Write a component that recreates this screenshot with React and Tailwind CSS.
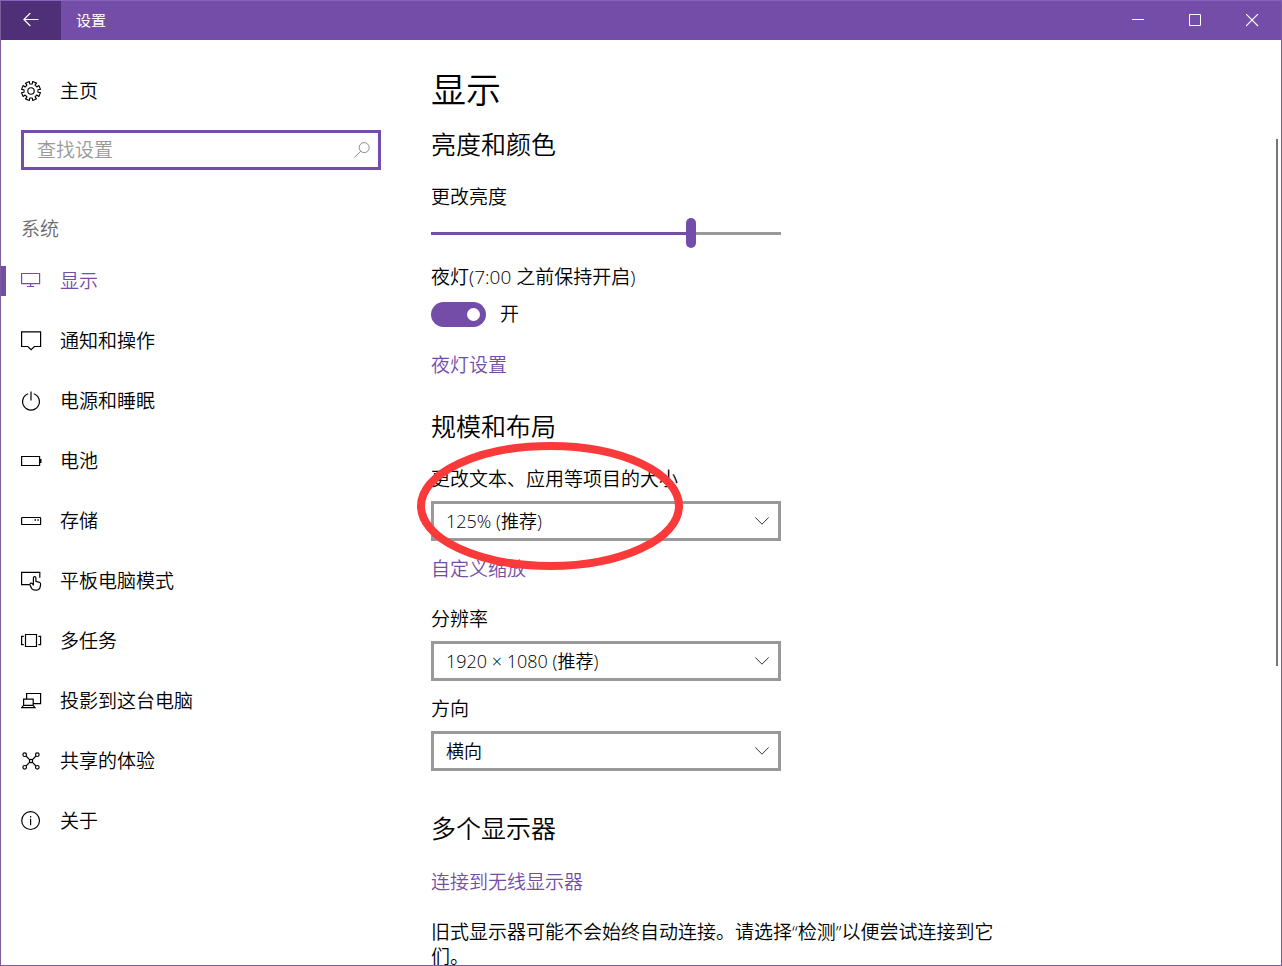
import { useState } from "react";

const NAV_ITEMS = [
  { label: "显示", icon: DisplayIcon, active: true },
  { label: "通知和操作", icon: NotificationIcon },
  { label: "电源和睡眠", icon: PowerIcon },
  { label: "电池", icon: BatteryIcon },
  { label: "存储", icon: StorageIcon },
  { label: "平板电脑模式", icon: TabletIcon },
  { label: "多任务", icon: MultitaskIcon },
  { label: "投影到这台电脑", icon: ProjectIcon },
  { label: "共享的体验", icon: SharedIcon },
  { label: "关于", icon: AboutIcon },
];

// 21px grid, hairline strokes
function Icon({ children }) {
  return (
    <svg className="h-[21px] w-[21px] shrink-0" viewBox="0 0 21 21" fill="none" stroke="currentColor" strokeWidth="1.2" aria-hidden="true">
      {children}
    </svg>
  );
}

function GearIcon() {
  const teeth = [];
  for (let i = 0; i < 8; i++) {
    const a = (i * Math.PI) / 4;
    [
      [7.1, -0.21],
      [9.6, -0.22],
      [9.6, 0.22],
      [7.1, 0.21],
    ].forEach(([r, d]) => teeth.push(`${10 + r * Math.cos(a + d + 0.39)},${10 + r * Math.sin(a + d + 0.39)}`));
  }
  return (
    <Icon>
      <polygon points={teeth.join(" ")} strokeLinejoin="round" strokeWidth="1.1" />
      <circle cx="10" cy="10" r="3.2" strokeWidth="1.1" />
    </Icon>
  );
}

function DisplayIcon() {
  return (
    <Icon>
      <path d="M.6 2.5h18v10.2H.6zM9.6 12.7v2.8M6 15.5h7.2" />
    </Icon>
  );
}

function NotificationIcon() {
  return (
    <Icon>
      <path d="M.6 .9h19v14.6h-6.2l-3.3 3.2-3.3-3.2H.6z" />
    </Icon>
  );
}

function PowerIcon() {
  return (
    <Icon>
      <path d="M10 .5v9M7.2 2.8a8.4 8.4 0 1 0 5.6 0" />
    </Icon>
  );
}

function BatteryIcon() {
  return (
    <Icon>
      <path d="M.6 5.5h18v9H.6z" />
      <path d="M19.6 8v4" strokeWidth="1.8" />
    </Icon>
  );
}

function StorageIcon() {
  return (
    <Icon>
      <rect x=".6" y="6.5" width="19" height="7" rx=".6" />
      <path d="M13.6 9h1.4M16.4 9h1.4" strokeWidth="1.4" />
    </Icon>
  );
}

function TabletIcon() {
  return (
    <Icon>
      <path d="M8.5 13.7H.6V1.3h18.2v5.5" />
      <path d="M12.4 13.4V6.8a1.25 1.25 0 0 1 2.5 0v3.6l3.4.9c1 .3 1.4.9 1.3 1.8l-.3 2.2a4.6 4.6 0 0 1-4.4 3.9h-.8a4.2 4.2 0 0 1-3.3-1.6l-1.7-3.2c-.6-1.3.2-2.4 1.3-2.3.9.1 1.6.5 2 2.3z" />
    </Icon>
  );
}

function MultitaskIcon() {
  return (
    <Icon>
      <path d="M4.5 3.5h11v12h-11zM2.8 5.3H.6v8.4h2.2M17.4 5.3h2.2v8.4h-2.2" />
    </Icon>
  );
}

function ProjectIcon() {
  return (
    <Icon>
      <path d="M5.6 8V2.5h14v10.2h-7M2.6 8.1h9.6v6.3H2.6zM2.6 14.4L.7 16.6h13.2l-1.7-2.2" />
    </Icon>
  );
}

function SharedIcon() {
  return (
    <Icon>
      <circle cx="3.7" cy="3.7" r="1.8" />
      <circle cx="16.3" cy="3.7" r="1.8" />
      <circle cx="3.7" cy="16.3" r="1.8" />
      <circle cx="16.3" cy="16.3" r="1.8" />
      <circle cx="10" cy="10" r="1.7" />
      <path d="M5 5l3.8 3.8M15 5l-3.8 3.8M5 15l3.8-3.8M15 15l-3.8-3.8" />
    </Icon>
  );
}

function AboutIcon() {
  return (
    <Icon>
      <circle cx="9.6" cy="9.6" r="8.9" />
      <path d="M9.6 7.8v6.4M9.6 5v1.5" />
    </Icon>
  );
}

function TitleBar() {
  return (
    <header className="flex h-[39px] shrink-0 items-center bg-[#744da9] text-white">
      <button type="button" aria-label="返回" className="flex h-full w-[60px] items-center justify-center bg-[#4e2f78]">
        <svg className="h-[15px] w-4" viewBox="0 0 16 15" fill="none" stroke="currentColor" strokeWidth="1.2">
          <path d="M15.5 6.5H1M7.3 0L.9 6.5 7.3 13" />
        </svg>
      </button>
      <span className="ml-[15px] flex-1 text-[15px] font-normal">设置</span>
      <button type="button" aria-label="最小化" className="flex h-full w-[57px] items-center justify-center">
        <svg className="h-[13px] w-[13px]" viewBox="0 0 13 13" stroke="currentColor">
          <path d="M0 5.5h12" />
        </svg>
      </button>
      <button type="button" aria-label="最大化" className="flex h-full w-[57px] items-center justify-center">
        <svg className="h-[13px] w-[13px]" viewBox="0 0 13 13" fill="none" stroke="currentColor">
          <path d="M.5.5h11v11H.5z" />
        </svg>
      </button>
      <button type="button" aria-label="关闭" className="flex h-full w-[57px] items-center justify-center">
        <svg className="h-[13px] w-[13px]" viewBox="0 0 13 13" stroke="currentColor" strokeWidth="1.1">
          <path d="M0 0l12 12M12 0L0 12" />
        </svg>
      </button>
    </header>
  );
}

function Sidebar() {
  return (
    <aside className="w-[430px] shrink-0 pt-[21px]">
      <a href="#home" className="flex h-[60px] items-center gap-[18px] pl-5">
        <GearIcon />
        主页
      </a>
      <div className="relative ml-5 mt-[9px] w-[360px]">
        <input
          type="search"
          aria-label="查找设置"
          placeholder="查找设置"
          className="block h-10 w-full border-3 border-[#744da9] bg-white pl-[13px] pr-10 outline-none placeholder:text-[#999]"
        />
        <svg className="pointer-events-none absolute right-[11px] top-3 h-4 w-4 text-[#8a8a8a]" viewBox="0 0 16 16" fill="none" stroke="currentColor">
          <circle cx="10.2" cy="5.6" r="5" />
          <path d="M6.7 9.2L.4 15.5" />
        </svg>
      </div>
      <h2 className="ml-5 mt-[47px] leading-[25px] text-[#6b6b6b]">系统</h2>
      <nav className="mt-[9px]">
        {NAV_ITEMS.map(({ label, icon: NavIcon, active }) => (
          <a
            key={label}
            href={`#${label}`}
            aria-current={active ? "page" : undefined}
            className={`flex h-[60px] items-center ${active ? "text-[#744da9]" : ""}`}
          >
            <span className={`h-[30px] w-[5px] ${active ? "bg-[#744da9]" : ""}`} />
            <span className="ml-[15px] flex items-center gap-[18px]">
              <NavIcon />
              {label}
            </span>
          </a>
        ))}
      </nav>
    </aside>
  );
}

function SelectField({ id, label, options }) {
  return (
    <>
      <label htmlFor={id} className="block leading-[25px]">
        {label}
      </label>
      <div className="relative mt-[9px] w-[350px]">
        <select id={id} className="block h-10 w-full appearance-none border-3 border-[#999] bg-white pl-3 pr-10 text-lg outline-none">
          {options.map((option) => (
            <option key={option}>{option}</option>
          ))}
        </select>
        <svg className="pointer-events-none absolute right-3 top-4 h-2 w-[14px]" viewBox="0 0 14 8" fill="none" stroke="#333">
          <path d="M.3.4L7 7.2 13.7.4" />
        </svg>
      </div>
    </>
  );
}

function Brightness() {
  const [value, setValue] = useState(75);
  return (
    <>
      <label htmlFor="brightness" className="mt-6 block leading-[25px]">
        更改亮度
      </label>
      <input
        id="brightness"
        type="range"
        value={value}
        onChange={(e) => setValue(Number(e.target.value))}
        style={{ backgroundImage: `linear-gradient(to right, #744da9 ${value}%, #999 ${value}%)` }}
        className="mt-2 block h-[30px] w-[350px] appearance-none bg-[length:100%_3px] bg-center bg-no-repeat [&::-webkit-slider-thumb]:h-[30px] [&::-webkit-slider-thumb]:w-[10px] [&::-webkit-slider-thumb]:appearance-none [&::-webkit-slider-thumb]:rounded-full [&::-webkit-slider-thumb]:bg-[#744da9]"
      />
    </>
  );
}

function DisplaySettings() {
  return (
    <main className="min-w-0 flex-1 pt-[26px]">
      <h1 className="text-[35px] leading-[48px]">显示</h1>

      {/* Brightness and color */}
      <section className="mt-[13px]">
        <h2 className="text-[25px] leading-[34px]">亮度和颜色</h2>
        <Brightness />
        <label htmlFor="night-light" className="mt-[17px] block leading-[25px]">
          夜灯(7:00 之前保持开启)
        </label>
        <div className="mt-3 flex h-[25px] items-center gap-[14px]">
          <input
            id="night-light"
            type="checkbox"
            role="switch"
            defaultChecked
            className="flex h-[25px] w-[55px] appearance-none items-center justify-start rounded-full bg-[#999] px-[6px] before:h-[13px] before:w-[13px] before:rounded-full before:bg-white checked:justify-end checked:bg-[#744da9]"
          />
          <span>开</span>
        </div>
        <a href="#night-light-settings" className="mt-[26px] block w-fit leading-[25px] text-[#744da9]">
          夜灯设置
        </a>
      </section>

      {/* Scale and layout */}
      <section className="mt-[31px]">
        <h2 className="text-[25px] leading-[34px]">规模和布局</h2>
        <div className="relative mt-6">
          <SelectField id="scale" label="更改文本、应用等项目的大小" options={["125% (推荐)", "100%", "150%"]} />
          <a href="#custom-scaling" className="mt-4 block w-fit leading-[25px] text-[#744da9]">
            自定义缩放
          </a>
          <svg className="pointer-events-none absolute -left-[15px] -top-[26px] h-[130px] w-[268px]" viewBox="0 0 268 130" fill="none" stroke="#fa3a3a" strokeWidth="8">
            <ellipse cx="134" cy="65" rx="129" ry="60" />
          </svg>
        </div>
        <div className="mt-[25px]">
          <SelectField id="resolution" label="分辨率" options={["1920 × 1080 (推荐)", "1600 × 900", "1280 × 720"]} />
        </div>
        <div className="mt-4">
          <SelectField id="orientation" label="方向" options={["横向", "纵向"]} />
        </div>
      </section>

      {/* Multiple displays */}
      <section className="mt-10">
        <h2 className="text-[25px] leading-[34px]">多个显示器</h2>
        <a href="#wireless" className="mt-[25px] block w-fit leading-[25px] text-[#744da9]">
          连接到无线显示器
        </a>
        <p className="mt-[25px] max-w-[570px] leading-[25px]">
          旧式显示器可能不会始终自动连接。请选择“检测”以便尝试连接到它们。
        </p>
      </section>
    </main>
  );
}

export default function App() {
  return (
    <div className="flex h-screen flex-col overflow-hidden border border-[#7d5c9c] border-t-[#8a63bb] bg-white font-['Open_Sans','Noto_Sans_CJK_SC',sans-serif] text-[19px] font-[350] text-black">
      <TitleBar />
      <div className="relative flex min-h-0 flex-1">
        <Sidebar />
        <DisplaySettings />
        {/* Collapsed scroll indicator */}
        <div className="absolute right-[3px] top-[99px] h-[57%] w-[2px] bg-[#767676]" />
      </div>
    </div>
  );
}
